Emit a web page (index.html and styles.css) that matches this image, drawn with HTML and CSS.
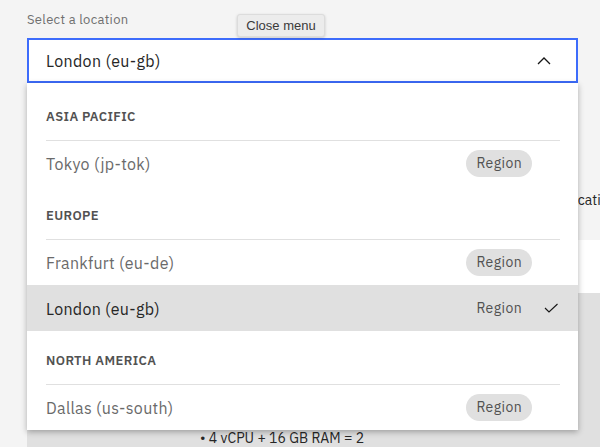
FILE: index.html
```html
<!DOCTYPE html>
<html lang="en">
<head>
<meta charset="utf-8">
<title>Select a location</title>
<link rel="stylesheet" href="styles.css">
</head>
<body>
<div class="page">
  <div class="label">Select a location</div>
  <div class="dropdown">
    <div class="field">
      <span class="field-text">London (eu-gb)</span>
      <svg class="chevron" width="16" height="16" viewBox="0 0 16 16"><polyline points="2,11 8,5 14,11" fill="none" stroke="#161616" stroke-width="1.3"/></svg>
    </div>
    <div class="tooltip">Close menu</div>
    <div class="menu">
      <div class="group">ASIA PACIFIC</div>
      <div class="item"><div class="inner"><span class="name">Tokyo (jp-tok)</span><span class="tag">Region</span></div></div>
      <div class="group">EUROPE</div>
      <div class="item"><div class="inner"><span class="name">Frankfurt (eu-de)</span><span class="tag">Region</span></div></div>
      <div class="item selected"><div class="inner"><span class="name">London (eu-gb)</span><span class="tag plain">Region</span>
        <svg class="check" width="16" height="16" viewBox="0 0 16 16"><polyline points="2,8 6,12 14.5,4" fill="none" stroke="#161616" stroke-width="1.1"/></svg></div></div>
      <div class="group">NORTH AMERICA</div>
      <div class="item"><div class="inner"><span class="name">Dallas (us-south)</span><span class="tag">Region</span></div></div>
    </div>
  </div>
  <div class="behind">
    <p class="note">Location</p>
    <div class="white-box"></div>
    <div class="gray-box"><span class="spec">• 4 vCPU + 16 GB RAM = 2</span></div>
  </div>
</div>
</body>
</html>
```
FILE: styles.css
```css
html, body {
  margin: 0;
  padding: 0;
  background: #f4f4f4;
  overflow: hidden;
  height: 447px;
}
body {
  font-family: "IBM Plex Sans", Roboto, "Noto Sans", sans-serif;
  color: #161616;
}
.page {
  padding: 10px 0 0 27px;
}
.label {
  font-size: 13px;
  line-height: 20px;
  color: #6f6f6f;
  letter-spacing: 0.3px;
}
.dropdown {
  position: relative;
  margin-top: 8px;
  width: 551px;
}
.field {
  box-sizing: border-box;
  height: 45px;
  border: 2px solid #3d6cfb;
  background: #fff;
  display: flex;
  align-items: center;
  justify-content: space-between;
  padding: 0 24px 0 17px;
}
.field-text {
  font-size: 16px;
  letter-spacing: 0.35px;
  color: #262626;
}
.chevron {
  display: block;
}
.tooltip {
  position: absolute;
  top: -24px;
  left: 210px;
  box-sizing: border-box;
  width: 88px;
  height: 23px;
  background: #ececec;
  border: 1px solid #dcdcdc;
  border-radius: 3px;
  box-shadow: 0 1px 3px rgba(0,0,0,0.18);
  font-family: "Liberation Sans", Arial, sans-serif;
  font-size: 13px;
  line-height: 21px;
  color: #3a3a3a;
  text-align: center;
}
.menu {
  position: absolute;
  top: 45px;
  left: 0;
  width: 551px;
  background: #fff;
  padding-top: 4px;
  box-shadow: 0 2px 6px rgba(0,0,0,0.3);
  z-index: 2;
}
.group {
  box-sizing: border-box;
  height: 53px;
  padding: 22px 19px 0;
  font-size: 13px;
  font-weight: 600;
  line-height: 16px;
  color: #525252;
  letter-spacing: 0.4px;
}
.item {
  height: 46px;
  padding: 0 18px 0 19px;
}
.item.selected {
  background: #e0e0e0;
}
.inner {
  box-sizing: border-box;
  height: 46px;
  border-top: 1px solid #e0e0e0;
  display: flex;
  align-items: center;
  padding-right: 28px;
  position: relative;
}
.selected .inner {
  border-top-color: transparent;
}
.name {
  flex: 1;
  font-size: 16px;
  letter-spacing: 0.3px;
  color: #6a6a6a;
}
.selected .name {
  color: #262626;
}
.tag {
  height: 27px;
  line-height: 27px;
  padding: 0 10px;
  border-radius: 14px;
  background: #e0e0e0;
  font-size: 14px;
  color: #525252;
  letter-spacing: 0.4px;
}
.tag.plain {
  background: transparent;
}
.check {
  position: absolute;
  right: 1px;
  top: 14px;
}
.behind {
  padding-top: 107px;
}
.note {
  margin: 0 0 30px 536px;
  font-size: 14px;
  line-height: 20px;
  color: #262626;
  white-space: nowrap;
}
.white-box {
  height: 53px;
  background: #fff;
}
.gray-box {
  height: 154px;
  background: #e0e0e0;
  box-sizing: border-box;
  padding: 134px 0 0 173px;
}
.spec {
  font-size: 14px;
  line-height: 20px;
  color: #262626;
}
```
